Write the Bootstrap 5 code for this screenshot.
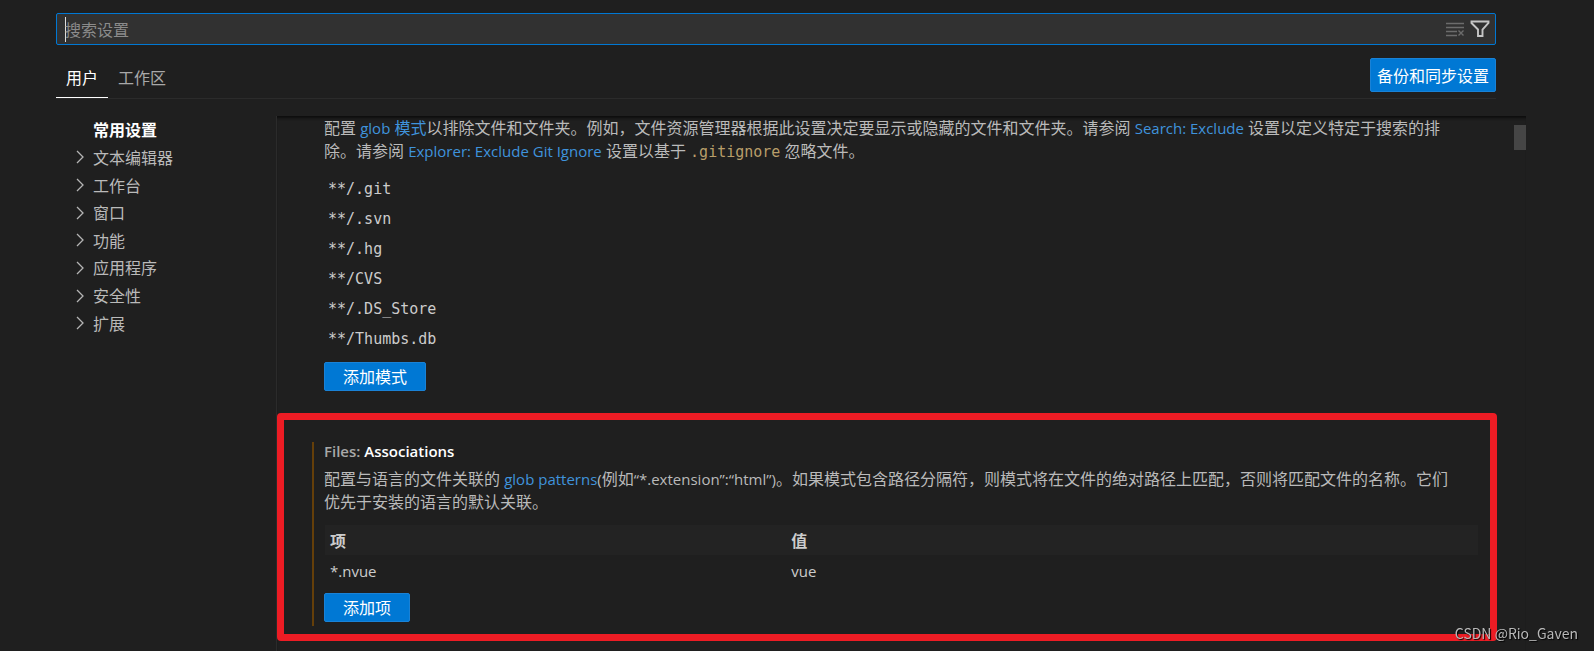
<!DOCTYPE html>
<html lang="zh-CN" data-bs-theme="dark">
<head>
<meta charset="utf-8">
<meta name="viewport" content="width=device-width, initial-scale=1">
<title>设置</title>
<link href="https://cdn.jsdelivr.net/npm/bootstrap@5.3.0/dist/css/bootstrap.min.css" rel="stylesheet">
<style>
  :root { --ui: "Open Sans", "Noto Sans CJK SC", sans-serif; --accent: #0078d4; --line: #2b2b2b; }
  body { background: #1f1f1f; color: #bababa; font: 16px/23px var(--ui); }
  a { color: #3f93dc; text-decoration: none; }
  button, input, .toc, th { font-family: "Noto Sans CJK SC", sans-serif !important; }
  .latin { font-size: 15px; }
  p .latin, p code { line-height: 1; }
  .settings-page { padding: 13px 68px 0 56px; overflow: hidden; }
  .settings-head { margin-right: 30px; }
  .search-box { height: 32px; background: #313131; border: 1px solid var(--accent); border-radius: 2px; padding: 0 5px 0 8px; }
  .search-box input { background: none; border: 0; outline: 0; padding: 0; color: #ccc; }
  .search-box input::placeholder { color: #8b8b8b; opacity: 1; }
  .caret-line { width: 1px; height: 25px; margin-right: -1px; background: #ddd; }
  .tool { border: 0; background: none; padding: 0; width: 20px; height: 20px; }
  .tool svg, .toc svg { display: block; }
  .scope-row { height: 54px; border-bottom: 1px solid var(--line); }
  .scope { border: 0; background: none; color: #a8a8a8; height: 40px; padding: 0 10px; border-bottom: 1px solid transparent; }
  .scope.active { color: #fff; border-color: #fff; }
  .act { --bs-btn-bg: var(--accent); --bs-btn-color: #fff; --bs-btn-border-color: #1a82d6; --bs-btn-hover-bg: #026ec1; --bs-btn-border-radius: 2px; --bs-btn-padding-y: 2px; --bs-btn-padding-x: 18px; --bs-btn-line-height: 23px; --bs-btn-font-size: 16px; }
  .sync { --bs-btn-padding-x: 6px; height: 34px; margin-top: 13px; }
  .lower { padding-top: 17px; }
  .toc { width: 220px; height: 221px; padding-left: 17px; }
  .toc a { color: #bababa; flex: 1; gap: 6px; }
  .toc a.active { color: #fff; font-weight: 700; padding-left: 20px; }
  .pane { border-left: 1px solid var(--line); box-shadow: inset 0 4px 3px -2px #0c0c0c; }
  .thumb { width: 12px; height: 25px; background: #454545; top: 9px; right: 0; }
  .setting-text { margin: 0; padding-right: 18px; }
  .first { padding: 1px 49px 0 47px; }
  .mono { font-family: "DejaVu Sans Mono", monospace; font-size: 15px; color: #ccc; }
  .patterns { padding: 11px 0 8px 4px; margin: 0; }
  .patterns li { height: 30px; line-height: 30px; }
  code.mono { color: #b89e6a; }
  .marked-box { border: 7px solid #ed1c24; border-radius: 4px; margin: 22px 29px 9px 0; padding: 22px 13px 8px 28px; }
  .modified { border-left: 2px solid #653f09; padding: 0 0 4px 10px; }
  .modified h2 { font: 600 15px/18px var(--ui); margin: 0 0 8px; color: #a8a8a8; }
  .modified h2 b { color: #fff; font-weight: 600; }
  .pairs { color: #ccc; margin: 11px 0 6px 1px; table-layout: fixed; width: 100%; }
  .pairs th, .pairs td { height: 30px; padding: 0 5px; }
  .pairs td { height: 32px; }
  .pairs thead { background: #232323; }
  .pairs th:first-child { width: 40%; }
  .stamp { position: fixed; right: 16px; bottom: 7px; font: 14px/22px "Noto Sans CJK SC", sans-serif; color: #b8b8b8; text-shadow: 1px 1px 1px #000; }
</style>
</head>
<body>
<main class="settings-page min-vh-100 d-flex flex-column">
  <header class="settings-head">
    <div class="search-box d-flex align-items-center">
      <span class="caret-line"></span>
      <input class="flex-grow-1" type="text" placeholder="搜索设置" aria-label="搜索设置">
      <button class="tool me-1" type="button" aria-label="清除搜索">
        <svg width="20" height="20" viewBox="0 0 20 20" fill="none" stroke="#6c6c6c" stroke-width="1.400"><path d="M0 4.500h18M0 8.500h18M0 12.500h11M0 16.500h11M12.500 11.500l5 5M17.500 11.500l-5 5"/></svg>
      </button>
      <button class="tool" type="button" aria-label="筛选">
        <svg width="20" height="20" viewBox="0 0 20 20" fill="none" stroke="#c5c5c5" stroke-width="1.900"><path d="M1.500 2.500h17v1.500l-6 6.500v6.500h-4.500v-6.500l-6.500-6.500z"/></svg>
      </button>
    </div>
    <div class="scope-row d-flex align-items-end">
      <button class="scope active" type="button">用户</button>
      <button class="scope" type="button">工作区</button>
      <button class="btn act sync ms-auto align-self-start" type="button">备份和同步设置</button>
    </div>
  </header>
  <div class="lower d-flex flex-grow-1">
    <nav class="toc d-flex flex-column flex-shrink-0" aria-label="设置目录">
      <a class="active d-flex align-items-center" href="#">常用设置</a>
      <a class="d-flex align-items-center" href="#"><svg width="14" height="14" viewBox="0 0 14 14" fill="none" stroke="#b4b4b4" stroke-width="1.300"><path d="M4 1l6 6-6 6"/></svg>文本编辑器</a>
      <a class="d-flex align-items-center" href="#"><svg width="14" height="14" viewBox="0 0 14 14" fill="none" stroke="#b4b4b4" stroke-width="1.300"><path d="M4 1l6 6-6 6"/></svg>工作台</a>
      <a class="d-flex align-items-center" href="#"><svg width="14" height="14" viewBox="0 0 14 14" fill="none" stroke="#b4b4b4" stroke-width="1.300"><path d="M4 1l6 6-6 6"/></svg>窗口</a>
      <a class="d-flex align-items-center" href="#"><svg width="14" height="14" viewBox="0 0 14 14" fill="none" stroke="#b4b4b4" stroke-width="1.300"><path d="M4 1l6 6-6 6"/></svg>功能</a>
      <a class="d-flex align-items-center" href="#"><svg width="14" height="14" viewBox="0 0 14 14" fill="none" stroke="#b4b4b4" stroke-width="1.300"><path d="M4 1l6 6-6 6"/></svg>应用程序</a>
      <a class="d-flex align-items-center" href="#"><svg width="14" height="14" viewBox="0 0 14 14" fill="none" stroke="#b4b4b4" stroke-width="1.300"><path d="M4 1l6 6-6 6"/></svg>安全性</a>
      <a class="d-flex align-items-center" href="#"><svg width="14" height="14" viewBox="0 0 14 14" fill="none" stroke="#b4b4b4" stroke-width="1.300"><path d="M4 1l6 6-6 6"/></svg>扩展</a>
    </nav>
    <div class="pane flex-grow-1 position-relative">
      <div class="thumb position-absolute"></div>
      <section class="first">
        <p class="setting-text">配置 <a href="#"><span class="latin">glob</span> 模式</a>以排除文件和文件夹。例如，文件资源管理器根据此设置决定要显示或隐藏的文件和文件夹。请参阅 <a class="latin" href="#">Search: Exclude</a> 设置以定义特定于搜索的排除。请参阅 <a class="latin" href="#">Explorer: Exclude Git Ignore</a> 设置以基于 <code class="mono">.gitignore</code> 忽略文件。</p>
        <ul class="patterns list-unstyled mono">
          <li>**/.git</li>
          <li>**/.svn</li>
          <li>**/.hg</li>
          <li>**/CVS</li>
          <li>**/.DS_Store</li>
          <li>**/Thumbs.db</li>
        </ul>
        <button class="btn act" type="button">添加模式</button>
      </section>
      <section class="marked-box">
        <div class="modified">
          <h2>Files: <b>Associations</b></h2>
          <p class="setting-text">配置与语言的文件关联的 <a class="latin" href="#">glob patterns</a><span class="latin">(</span>例如<span class="latin">“*.extension”:“html”)</span>。如果模式包含路径分隔符，则模式将在文件的绝对路径上匹配，否则将匹配文件的名称。它们优先于安装的语言的默认关联。</p>
          <table class="pairs">
            <thead><tr><th>项</th><th>值</th></tr></thead>
            <tbody><tr><td class="latin">*.nvue</td><td class="latin">vue</td></tr></tbody>
          </table>
          <button class="btn act" type="button">添加项</button>
        </div>
      </section>
    </div>
  </div>
</main>
<div class="stamp">CSDN @Rio_Gaven</div>
<script src="https://cdn.jsdelivr.net/npm/bootstrap@5.3.0/dist/js/bootstrap.bundle.min.js"></script>
</body>
</html>
